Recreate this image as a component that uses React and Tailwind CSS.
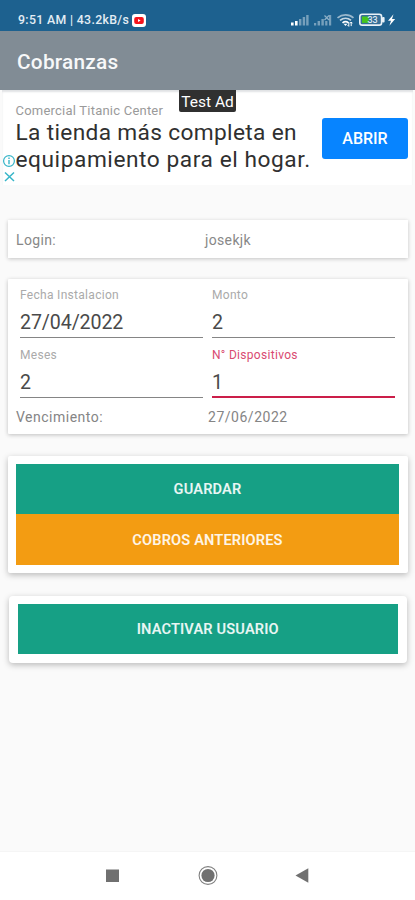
import React from 'react';

function StatusIcons() {
  return (
    <svg width="112" height="20" viewBox="0 0 112 20" className="block">
      <g fill="#fff">
        <rect x="3" y="12.5" width="2.6" height="3" />
        <rect x="7" y="11" width="2.6" height="4.5" />
        <g opacity=".4">
          <rect x="11" y="9" width="2.4" height="6.5" />
          <rect x="14.7" y="7" width="2.4" height="8.5" />
          <rect x="18.2" y="5" width="2.4" height="10.5" />
          <rect x="26" y="13" width="2.2" height="2.5" />
          <rect x="29.6" y="11" width="2.4" height="4.5" />
          <rect x="33.4" y="9" width="2.4" height="6.5" />
          <rect x="37.2" y="11" width="2.2" height="4.5" />
          <rect x="41" y="5" width="2.2" height="10.5" />
        </g>
      </g>
      <path d="M36.5 5.5l4.5 4.5m0-4.5L36.5 10" stroke="#fff" strokeOpacity=".5" strokeWidth="1.2" />
      <g fill="none" stroke="#fff" strokeWidth="1.7">
        <path d="M49.5 7.8c4.8-4 11.4-4 16 0" opacity=".55" />
        <path d="M52 10.4c3.4-2.8 7.8-2.8 11 0" opacity=".75" />
        <path d="M54.5 12.8c1.9-1.5 4.2-1.5 6 0" />
      </g>
      <path d="M55.5 13.8h4l-2 2.2z" fill="#fff" />
      <path d="M60.8 12v4.3m-1.2-1.2l1.2 1.3m2.4-4.3v4m-1.1-2.8l1.1-1.3 1.2 1.3" stroke="#fff" strokeWidth="1" fill="none" />
      <rect x="71.8" y="4.3" width="21.8" height="10.8" rx="2.4" fill="#366f98" stroke="#e9f2f8" strokeWidth="1.6" />
      <rect x="94" y="7" width="2.6" height="5.4" rx="1" fill="#e9f2f8" />
      <rect x="74" y="6.5" width="6.6" height="6.4" fill="#45c51c" />
      <text x="79.5" y="12.9" fontFamily="Roboto, sans-serif" fontSize="9" fontWeight="500" fill="#dce8f0">33</text>
      <path d="M105.5 4.3l-5.5 6.4h3l-1.6 5 5.7-6.7h-3.1z" fill="#fff" />
    </svg>
  );
}

function Field({ label, value, active }) {
  return (
    <div className="h-[59.5px] w-[183px]">
      <div className={`h-4 text-[12px] leading-4 tracking-[0.3px] whitespace-nowrap ${active ? 'text-[#d94a71]' : 'text-[#aaaaaa]'}`}>
        {label}
      </div>
      <div className={`h-[35px] pt-[5px] text-[19.6px] leading-[30px] tracking-[-0.1px] text-[#4a4a4a] ${active ? 'border-b-2 border-[#cb1e49]' : 'border-b border-[#858585]'}`}>
        {value}
      </div>
    </div>
  );
}

function Action({ children, orange }) {
  return (
    <button className={`block w-full pt-[2px] text-center text-[14.6px] font-semibold tracking-[0.15px] text-white/90 ${orange ? 'h-[51px] bg-[#f39c12]' : 'h-[50px] bg-[#16a085]'}`}>
      {children}
    </button>
  );
}

export default function App() {
  return (
    <div className="flex h-[900px] w-[415px] flex-col overflow-hidden bg-[#fafafa] font-['Roboto',sans-serif]">
      <header className="flex h-[31px] shrink-0 items-center bg-[#1d618f] pt-[9px] pl-[18px] text-white">
        <span className="w-[111px] text-[12.3px] leading-5 font-medium tracking-[0.34px] whitespace-nowrap text-[#e3edf4]">9:51 AM | 43.2kB/s</span>
        <svg width="14" height="13" viewBox="0 0 14 13" className="ml-[3px]">
          <rect width="14" height="13" rx="3" fill="#fff" />
          <rect x="2.2" y="3" width="9.6" height="7" rx="2" fill="#f5141d" />
          <path d="M6 4.9v3.2l2.6-1.6z" fill="#fff" />
        </svg>
        <div className="ml-auto pr-[15px]"><StatusIcons /></div>
      </header>

      <div className="flex h-[59px] shrink-0 items-center bg-[#818c95] pt-[4px] pl-[17px]">
        <h1 className="text-[20.8px] font-medium tracking-[0.25px] text-[#f7f8f9]">Cobranzas</h1>
      </div>

      <section className="relative mx-[2px] flex h-[95px] shrink-0 items-start bg-white shadow-[inset_0_2px_2px_#e0e2e4]">
        <div className="pt-[13px] pl-[13.5px] whitespace-nowrap">
          <div className="text-[13px] leading-4 tracking-[0.22px] text-[#9a9a9a]">Comercial Titanic Center</div>
          <div className="text-[22.7px] leading-[27px] text-[#303030]">
            <div className="tracking-[0.34px]">La tienda más completa en</div>
            <div className="tracking-[0.56px]">equipamiento para el hogar.</div>
          </div>
        </div>
        <button className="absolute top-[28px] right-[5px] h-[41px] w-[86px] rounded-[3px] bg-[#0784ff] text-[16px] font-medium text-white">ABRIR</button>
        <div className="absolute top-0 left-[177px] h-[22px] w-[57px] rounded-b-[2px] bg-[#303030] text-center text-[15.5px] leading-[25px] whitespace-nowrap text-white">Test Ad</div>
        <svg className="absolute top-[64px] left-0" width="14" height="30" viewBox="0 0 14 30" fill="none" stroke="#36b5c8">
          <circle cx="7" cy="7" r="5.4" strokeWidth="1.2" />
          <path d="M7 6v4.2M7 3.6v1.3" strokeWidth="1.4" />
          <path d="M3 18.5l9 8.5m0-8.5L3 27" strokeWidth="1.5" />
        </svg>
      </section>

      <main className="flex grow flex-col pt-[35px] pr-[7px] pl-[8px]">
        <section className="flex h-[38px] shrink-0 items-center bg-white pt-[2px] pl-[8px] text-[14px] tracking-[0.35px] text-[#888888] shadow-[0_1px_4px_rgba(0,0,0,0.22)]">
          <span className="w-[189px]">Login:</span>
          <span>josekjk</span>
        </section>

        <section className="mt-[21px] h-[155px] shrink-0 rounded-[1px] bg-white pt-[8px] shadow-[0_1px_4px_rgba(0,0,0,0.24)]">
          <div className="grid grid-cols-[183px_183px] gap-x-[9px] pl-[12px]">
            <Field label="Fecha Instalacion" value="27/04/2022" />
            <Field label="Monto" value="2" />
            <Field label="Meses" value="2" />
            <Field label="N° Dispositivos" value="1" active />
          </div>
          <div className="flex pt-px pl-[8px] text-[14px] leading-5 text-[#858585]">
            <span className="w-[192px] tracking-[0.5px]">Vencimiento:</span>
            <span className="tracking-[0.52px]">27/06/2022</span>
          </div>
        </section>

        <section className="mt-[22px] shrink-0 rounded-[2px] bg-white pt-[8px] pr-[9px] pb-[8px] pl-[8px] shadow-[0_2px_6px_rgba(0,0,0,0.26)]">
          <Action>GUARDAR</Action>
          <Action orange>COBROS ANTERIORES</Action>
        </section>

        <section className="mt-[23px] mr-px ml-px shrink-0 rounded-[4px] bg-white pt-[8px] pr-[9px] pb-[9px] pl-[8.5px] shadow-[0_2px_6px_rgba(0,0,0,0.26)]">
          <Action>INACTIVAR USUARIO</Action>
        </section>
      </main>

      <nav className="h-[49px] shrink-0 border-t border-[#f5f5f5] bg-white">
        <svg width="415" height="48" viewBox="0 0 415 48" fill="#707070">
          <rect x="106" y="17.5" width="13" height="12.5" />
          <circle cx="208" cy="23.5" r="6.6" />
          <circle cx="208" cy="23.5" r="8.9" fill="none" stroke="#808080" strokeWidth="1.1" />
          <path d="M295.5 23.5L308.3 16.3v14.4z" />
        </svg>
      </nav>
    </div>
  );
}
